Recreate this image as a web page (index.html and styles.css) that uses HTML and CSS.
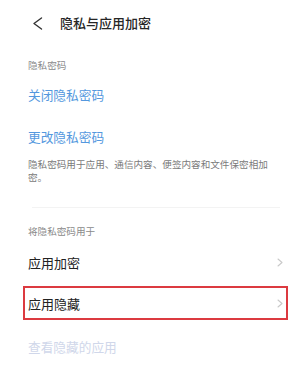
FILE: index.html
```html
<!DOCTYPE html>
<html lang="zh-CN">
<head>
<meta charset="utf-8">
<link rel="stylesheet" href="styles.css">
</head>
<body>
<div class="page">
  <div class="header">
    <svg class="back" width="11" height="13" viewBox="0 0 11 13"><path d="M9.5 1 L2 6.5 L9.5 12" fill="none" stroke="#333" stroke-width="1.4" stroke-linecap="round" stroke-linejoin="round"/></svg>
    <div class="title">隐私与应用加密</div>
  </div>
  <div class="label label-first">隐私密码</div>
  <div class="link">关闭隐私密码</div>
  <div class="link">更改隐私密码</div>
  <div class="desc">隐私密码用于应用、通信内容、便签内容和文件保密相加密。</div>
  <div class="divider"></div>
  <div class="label label-second">将隐私密码用于</div>
  <div class="row row-first">
    <span class="row-text">应用加密</span>
    <svg class="chev" width="6" height="9" viewBox="0 0 6 9"><path d="M1 1 L5 4.5 L1 8" fill="none" stroke="#c9c9c9" stroke-width="1.1" stroke-linecap="round" stroke-linejoin="round"/></svg>
  </div>
  <div class="row row-marked">
    <span class="row-text">应用隐藏</span>
    <svg class="chev" width="6" height="9" viewBox="0 0 6 9"><path d="M1 1 L5 4.5 L1 8" fill="none" stroke="#c9c9c9" stroke-width="1.1" stroke-linecap="round" stroke-linejoin="round"/></svg>
  </div>
  <div class="disabled">查看隐藏的应用</div>
</div>
</body>
</html>
```

FILE: styles.css
```css
html, body {
  margin: 0;
  padding: 0;
  background: #ffffff;
}
body {
  font-family: "Noto Sans CJK SC", "Noto Sans", sans-serif;
  color: #222;
}
.page {
  width: 302px;
  height: 376px;
  overflow: hidden;
}
.header {
  height: 46px;
  display: flex;
  align-items: center;
  padding-left: 32px;
  gap: 17px;
}
.back {
  display: block;
}
.title {
  font-size: 13px;
  font-weight: 500;
  color: #262626;
  line-height: 46px;
}
.label {
  font-size: 9.6px;
  line-height: 18px;
  color: #8a8a8a;
  padding-left: 28px;
}
.label-first {
  margin-top: 10px;
}
.link {
  font-size: 12.7px;
  line-height: 42px;
  color: #5498de;
  padding-left: 28px;
}
.desc {
  font-size: 9.6px;
  line-height: 13px;
  color: #7a7a7a;
  padding-left: 28px;
  width: 241px;
}
.divider {
  margin: 23px 22px 0 32px;
  height: 1px;
  background: #f3f3f3;
}
.label-second {
  margin-top: 14px;
}
.row {
  height: 30px;
  margin: 0 14px 0 23px;
  border: 2px solid transparent;
  display: flex;
  align-items: center;
  justify-content: space-between;
  padding: 0 3px 0 3px;
}
.row-first {
  margin-top: 5px;
}
.row-marked {
  margin-top: 7px;
  border-color: #dc3a40;
}
.row-text {
  font-size: 13px;
  color: #222;
}
.chev {
  display: block;
}
.disabled {
  margin-top: 12px;
  font-size: 12.7px;
  line-height: 30px;
  color: #d0d7ea;
  padding-left: 28px;
}
```
